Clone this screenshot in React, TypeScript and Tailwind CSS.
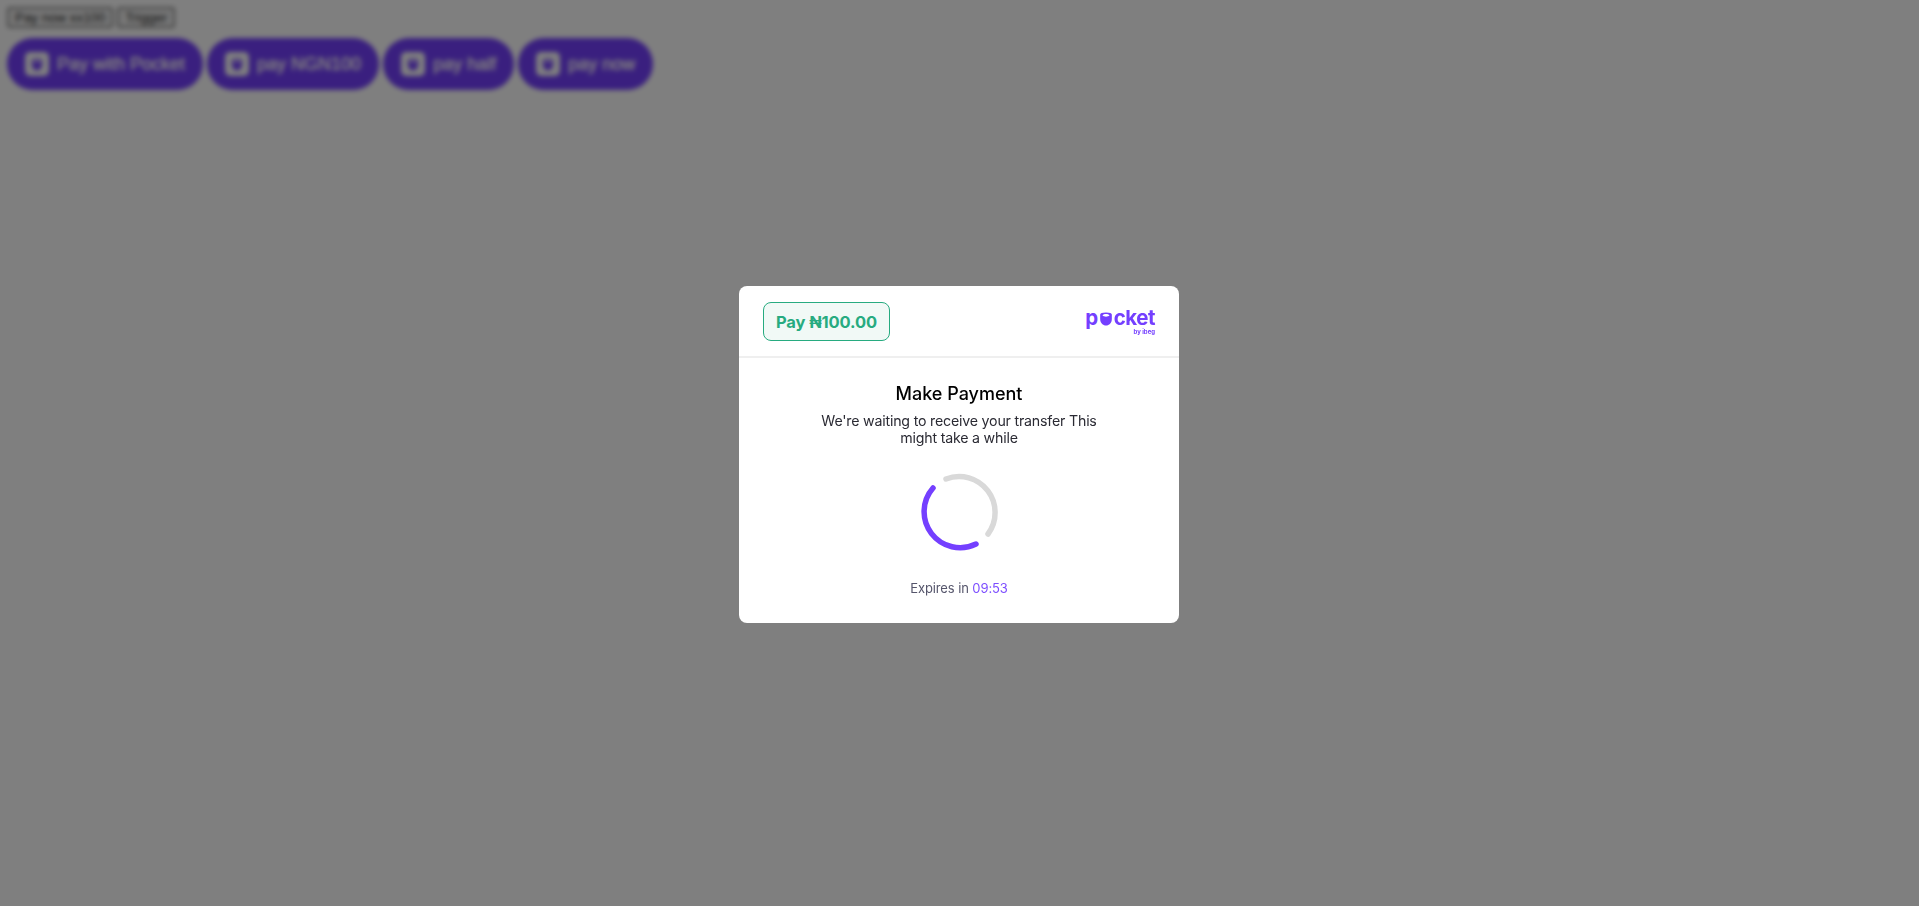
export default function App() {
  const Shield = ({ s = 24 }: { s?: number }) => (
    <span className="flex items-center justify-center bg-white rounded-[5px] shrink-0" style={{ width: s, height: s }}>
      <svg width="12" height="13" viewBox="0 0 12 13">
        <path d="M1 3 C1 1.2 2.8 0.5 6 0.5 C9.2 0.5 11 1.2 11 3 L11 7 C11 10.2 8.5 12.5 6 12.5 C3.5 12.5 1 10.2 1 7 Z" fill="#743fff" />
        <path d="M2.5 3.2 C4 1.8 8 1.8 9.5 3.2 C8 4.6 4 4.6 2.5 3.2 Z" fill="#ffffff" />
      </svg>
    </span>
  );
  const Pay = ({ label }: { label: string }) => (
    <button className="flex items-center gap-2 h-[52px] px-[18px] rounded-full bg-[#743fff] text-white text-[18px] [text-shadow:0_0_1px_#ffffff] font-['Liberation_Sans',sans-serif]">
      <Shield />
      {label}
    </button>
  );
  return (
    <div className="relative w-full h-[906px] overflow-hidden bg-white pl-[7px] pt-[7px] font-['Liberation_Sans',sans-serif]">
      <div className="flex gap-1">
        <button className="h-[21px] px-1.5 border-2 border-[#8a8a8a] rounded-[3px] bg-[#efefef] text-[#222222] text-[13.33px] leading-none">Pay now xx100</button>
        <button className="h-[21px] px-1.5 border-2 border-[#8a8a8a] rounded-[3px] bg-[#efefef] text-[#222222] text-[13.33px] leading-none">Trigger</button>
      </div>
      <div className="flex gap-1 mt-[10px]">
        <Pay label="Pay with Pocket" />
        <Pay label="pay NGN100" />
        <Pay label="pay half" />
        <Pay label="pay now" />
      </div>

      <div className="absolute inset-0 flex items-center justify-center bg-black/50 backdrop-blur-[2.5px] pt-[3px] pr-[1px]">
        <div className="w-[440px] h-[337px] bg-white rounded-lg flex flex-col font-['Inter',sans-serif]">
          <div className="h-[72px] shrink-0 flex items-center justify-between pl-6 pr-6 border-b-2 border-[#efefef]">
            <div className="h-[39px] w-[127px] pt-[2px] justify-center flex items-center rounded-lg border border-[#27ab80] bg-[#f1f9f6] text-[#27ab80] text-[16.5px] font-bold tracking-[-0.1px]">
              Pay ₦100.00
            </div>
            <div className="flex flex-col items-end text-[#743fff] mt-[1px]">
              <div className="flex items-center h-[20px] text-[20.5px] font-bold leading-none tracking-[-0.5px]">
                <span>p</span>
                <svg width="14" height="14" viewBox="0 0 17 18" className="mx-[1px] mt-[2px]">
                  <path d="M1 3.5 C1 1.5 3.5 0.5 8.5 0.5 C13.5 0.5 16 1.5 16 3.5 L16 9 C16 14 12.5 17.5 8.5 17.5 C4.5 17.5 1 14 1 9 Z" fill="#743fff" />
                  <path d="M4 4.5 C6 2 11 2 13 4.5 C11 6.5 6 6.5 4 4.5 Z" fill="#ffffff" />
                </svg>
                <span>cket</span>
              </div>
              <div className="text-[6px] leading-[6px] font-bold mt-[1px]">by ibeg</div>
            </div>
          </div>
          <div className="flex-1 flex flex-col items-center">
            <h2 className="mt-[22px] text-[18px] leading-[28px] font-medium text-black">Make Payment</h2>
            <p className="mt-[4px] w-[280px] text-center text-[14.2px] tracking-[-0.2px] leading-[17px] text-[#2a2a33]">
              We're waiting to receive your transfer This might take a while
            </p>
            <svg width="80" height="80" viewBox="0 0 80 80" className="mt-[25px] ml-[1px]" fill="none" strokeWidth="5.5" strokeLinecap="round">
              <path d="M26 8 A36 36 0 0 1 68 63" stroke="#d9d9d9" />
              <path d="M13 17 A36 36 0 0 0 56 73" stroke="#743fff" />
            </svg>
            <div className="mt-[27px] text-[13px] tracking-[-0.1px] leading-5 text-[#55556b]">
              Expires in <span className="text-[#7c4dff]">09:53</span>
            </div>
          </div>
        </div>
      </div>
    </div>
  );
}
